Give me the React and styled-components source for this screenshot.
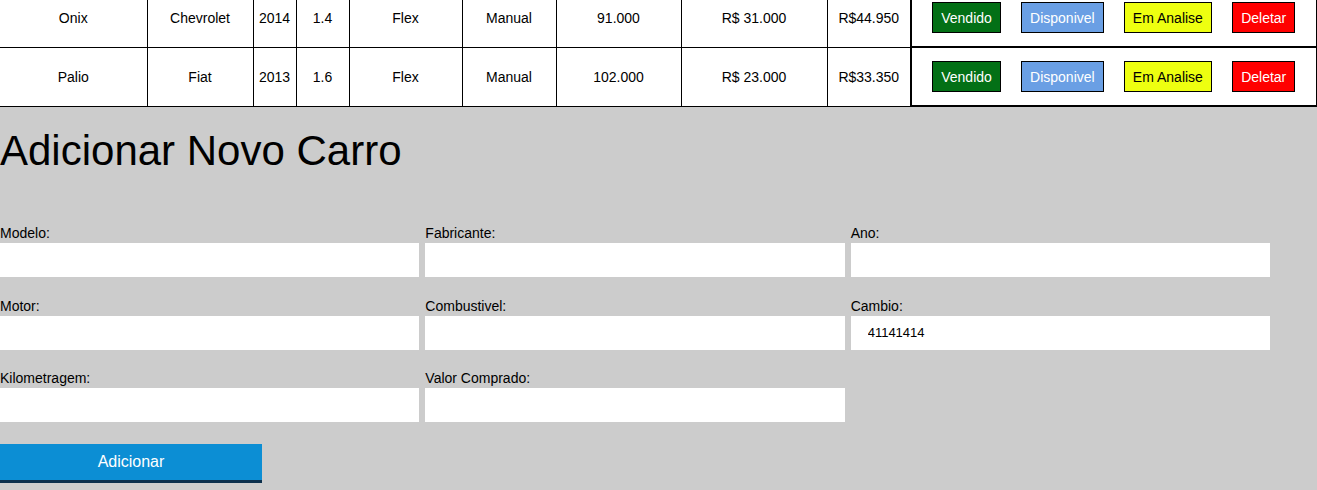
import React, { useState } from 'react';
import styled, { createGlobalStyle } from 'styled-components';

const GlobalStyle = createGlobalStyle`
  html, body {
    margin: 0;
    padding: 0;
    background: #cccccc;
    font-family: "Liberation Sans", Arial, sans-serif;
    overflow: hidden;
  }
`;

const Page = styled.div`
  width: 1317px;
`;

// the page is shown scrolled a little, so the first row is cut at the top
const TableWrap = styled.div`
  margin-top: -13px;
`;

const Table = styled.table`
  width: 1316px;
  border-collapse: collapse;
  table-layout: fixed;
  background: #ffffff;
`;

const Cell = styled.td`
  border: 1px solid #000;
  height: 58px;
  padding: 0;
  text-align: center;
  font-size: 14px;
  color: #000;

  &:first-child {
    border-left: none;
  }
`;

const ActionCell = styled.td`
  border: 2px solid #000;
  border-right: 1px solid #000;
  padding: 0;
`;

const Actions = styled.div`
  display: flex;
  justify-content: space-evenly;
  align-items: center;
`;

const StatusButton = styled.button`
  height: 31px;
  padding: 0 8px;
  border: 1px solid #000;
  background: ${(p) => p.$bg};
  color: ${(p) => p.$fg || '#fff'};
  font-family: "Liberation Sans", Arial, sans-serif;
  font-size: 14px;
  cursor: pointer;
`;

const Title = styled.h1`
  margin: 20px 0 51px;
  font-size: 42px;
  font-weight: normal;
  line-height: 47px;
  color: #000;
`;

const Form = styled.form`
  width: 1270px;
  display: grid;
  grid-template-columns: repeat(3, 1fr);
  column-gap: 6px;
  row-gap: 20.5px;
`;

const Field = styled.div`
  display: flex;
  flex-direction: column;
  gap: 2px;
`;

const Label = styled.label`
  font-size: 14px;
  line-height: 16px;
  color: #000;
`;

const Input = styled.input`
  height: 34px;
  border: none;
  outline: none;
  padding: 0 17px;
  background: #fff;
  font-family: "Liberation Sans", Arial, sans-serif;
  font-size: 13px;
  color: #000;
  box-sizing: border-box;
  width: 100%;
`;

const SubmitRow = styled.div`
  grid-column: 1 / -1;
  padding-top: 1px;
`;

const SubmitButton = styled.button`
  width: 262px;
  height: 39px;
  border: none;
  border-bottom: 3px solid #0b2f4c;
  background: #0c8ed4;
  color: #fff;
  font-family: "Liberation Sans", Arial, sans-serif;
  font-size: 16px;
  padding: 0;
  cursor: pointer;
`;

const columns = [147, 106, 43, 53, 113, 94, 125, 146, 84, 405];

const cars = [
  { id: 1, modelo: 'Onix', fabricante: 'Chevrolet', ano: '2014', motor: '1.4', combustivel: 'Flex', cambio: 'Manual', km: '91.000', comprado: 'R$ 31.000', venda: 'R$44.950' },
  { id: 2, modelo: 'Palio', fabricante: 'Fiat', ano: '2013', motor: '1.6', combustivel: 'Flex', cambio: 'Manual', km: '102.000', comprado: 'R$ 23.000', venda: 'R$33.350' },
];

const fields = [
  { name: 'modelo', label: 'Modelo:' },
  { name: 'fabricante', label: 'Fabricante:' },
  { name: 'ano', label: 'Ano:' },
  { name: 'motor', label: 'Motor:' },
  { name: 'combustivel', label: 'Combustivel:' },
  { name: 'cambio', label: 'Cambio:' },
  { name: 'km', label: 'Kilometragem:' },
  { name: 'comprado', label: 'Valor Comprado:' },
];

const App = () => {
  const [form, setForm] = useState({ cambio: '41141414' });

  const handleChange = (e) => setForm({ ...form, [e.target.name]: e.target.value });

  return (
    <Page>
      <GlobalStyle />
      <TableWrap>
        <Table>
          <colgroup>
            {columns.map((w, i) => (
              <col key={i} style={{ width: w }} />
            ))}
          </colgroup>
          <tbody>
            {cars.map((car) => (
              <tr key={car.id}>
                <Cell>{car.modelo}</Cell>
                <Cell>{car.fabricante}</Cell>
                <Cell>{car.ano}</Cell>
                <Cell>{car.motor}</Cell>
                <Cell>{car.combustivel}</Cell>
                <Cell>{car.cambio}</Cell>
                <Cell>{car.km}</Cell>
                <Cell>{car.comprado}</Cell>
                <Cell>{car.venda}</Cell>
                <ActionCell>
                  <Actions>
                    <StatusButton $bg="#037016">Vendido</StatusButton>
                    <StatusButton $bg="#6a9fe4">Disponivel</StatusButton>
                    <StatusButton $bg="#eeff10" $fg="#000">Em Analise</StatusButton>
                    <StatusButton $bg="#ff0000">Deletar</StatusButton>
                  </Actions>
                </ActionCell>
              </tr>
            ))}
          </tbody>
        </Table>
      </TableWrap>

      <Title>Adicionar Novo Carro</Title>

      <Form onSubmit={(e) => e.preventDefault()}>
        {fields.map((f) => (
          <Field key={f.name}>
            <Label htmlFor={f.name}>{f.label}</Label>
            <Input id={f.name} name={f.name} value={form[f.name] || ''} onChange={handleChange} />
          </Field>
        ))}
        <SubmitRow>
          <SubmitButton type="submit">Adicionar</SubmitButton>
        </SubmitRow>
      </Form>
    </Page>
  );
};

export default App;
